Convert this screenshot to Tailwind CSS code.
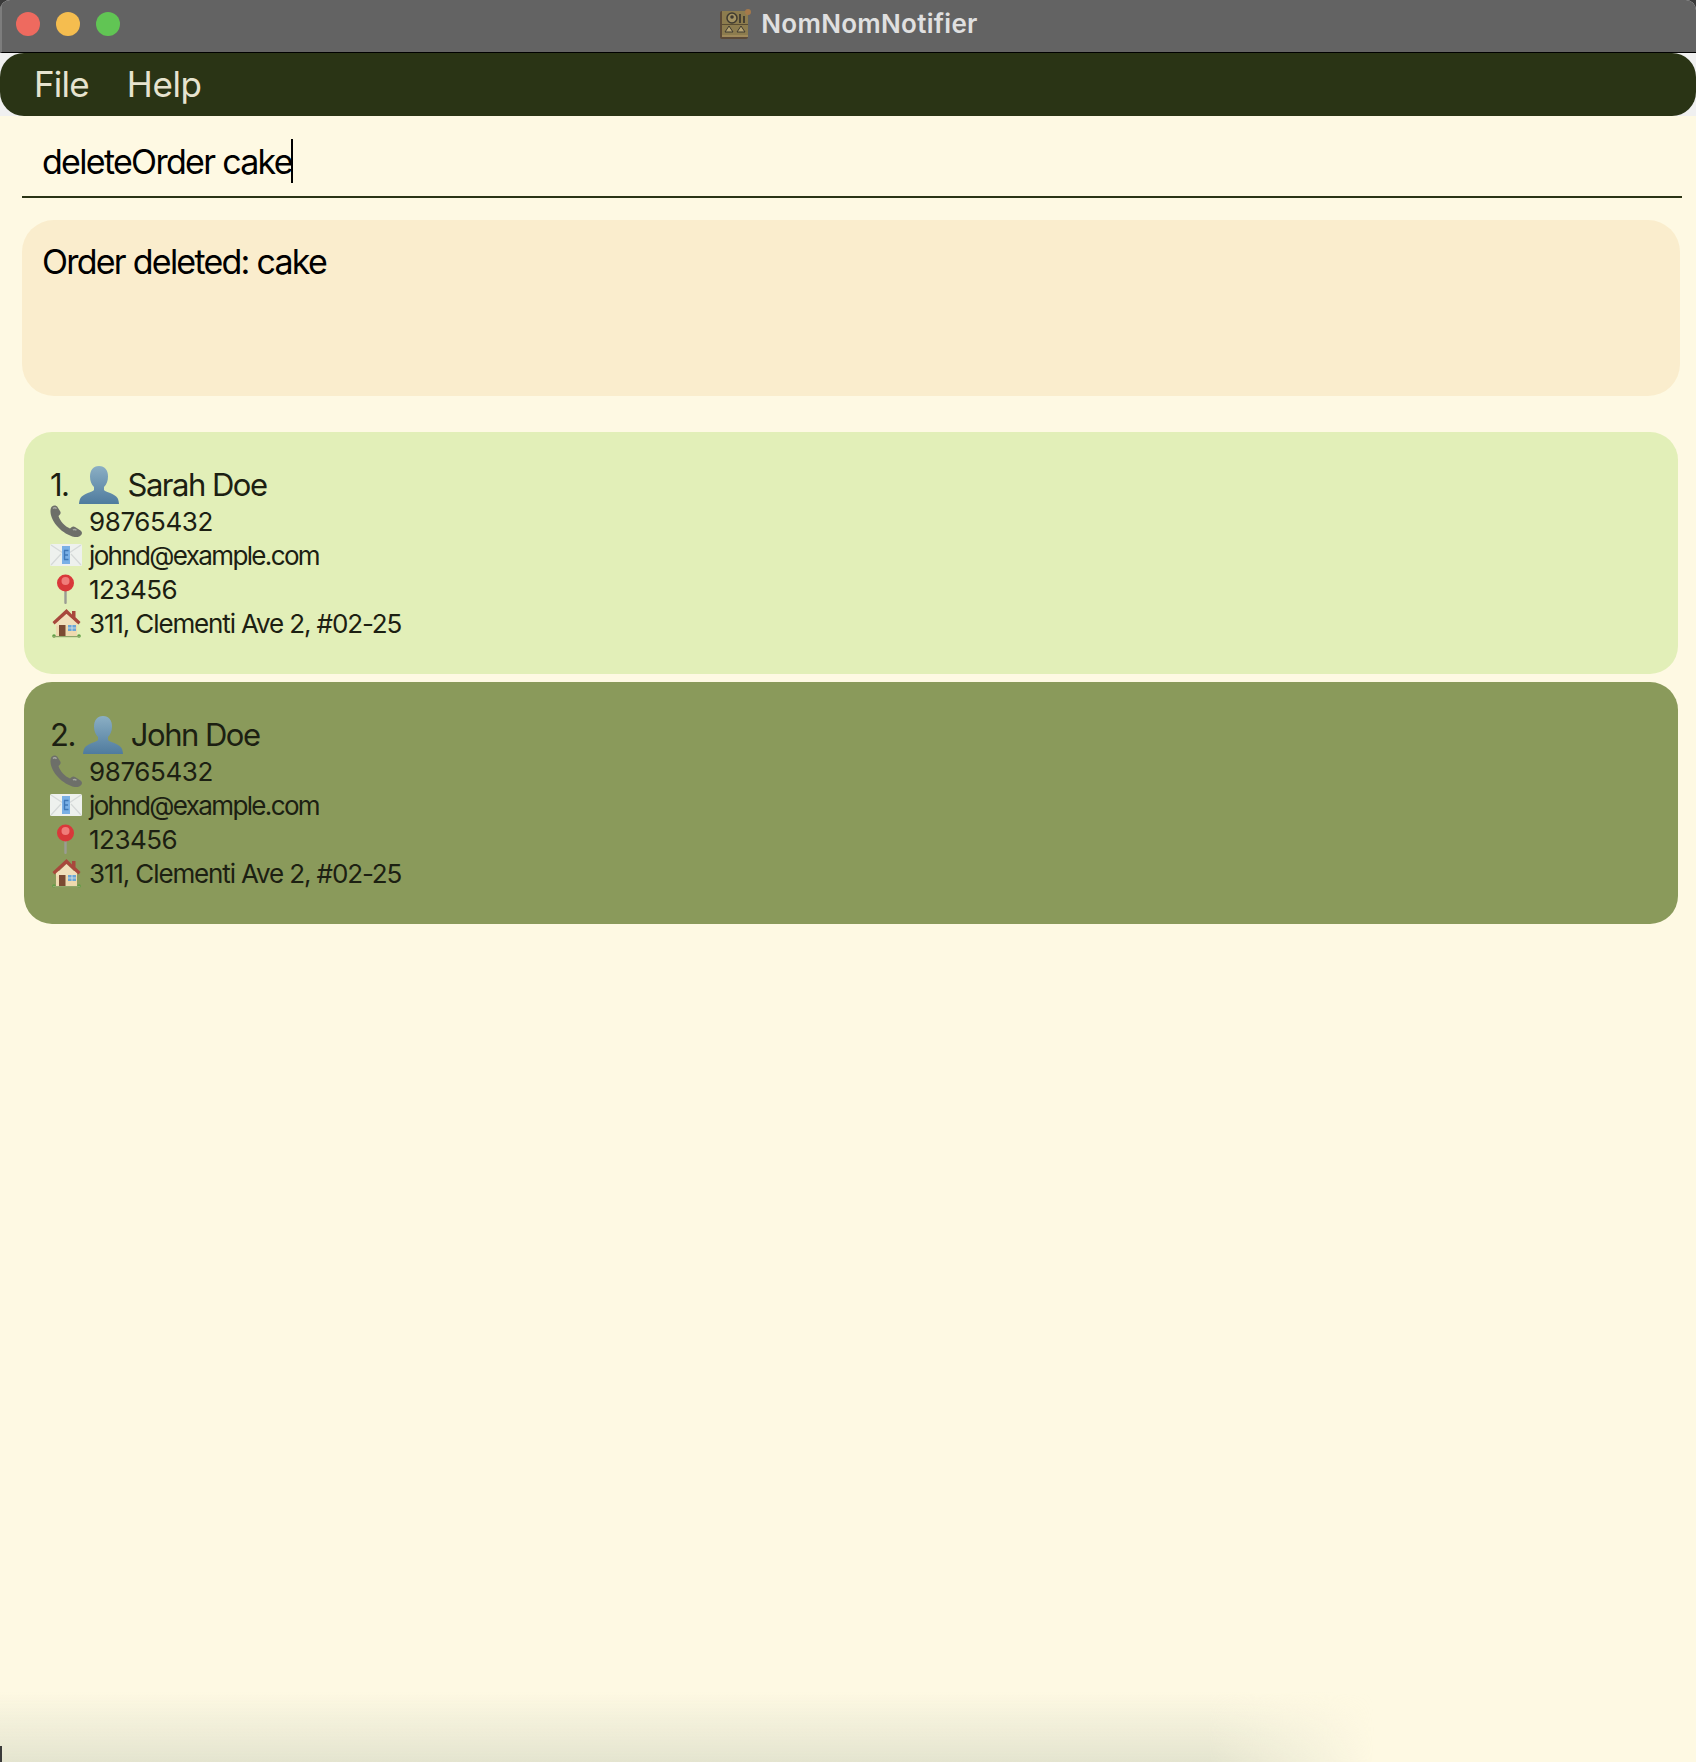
<!DOCTYPE html>
<html lang="en">
<head>
  <meta charset="UTF-8" />
  <meta name="viewport" content="width=device-width, initial-scale=1.0"/>
  <title>NomNomNotifier</title>
  <script src="https://cdn.jsdelivr.net/npm/@tailwindcss/browser@4"></script>
</head>
<body class="bg-[#3a3a3a] font-['Inter',sans-serif]">
  <svg class="absolute w-0 h-0">
    <defs>
      <linearGradient id="personFill" x1="0" y1="0" x2="0" y2="1">
        <stop offset="0" stop-color="#8bafc4"/>
        <stop offset="1" stop-color="#4f7b9e"/>
      </linearGradient>
      <symbol id="person" viewBox="0 0 40 38">
        <path d="M20 0c6 0 9 4.500 9 10.500 0 4.500-1.500 8-4 10.500v3c1 2 11 3.500 13.500 8 .9 1.800 1.300 3.500 1.500 6H0c.2-2.500.6-4.200 1.500-6C4 27.500 14 26 15 24v-3c-2.500-2.500-4-6-4-10.500C11 4.500 14 0 20 0z" fill="url(#personFill)"/>
      </symbol>
      <symbol id="phone" viewBox="0 0 32 32">
        <path d="M2 1.500c2-1.500 4.500-1 5.500.5l2.800 4.500c.7 1.300.3 2.500-.8 3.500L8.500 11c1.500 5 6.500 10.500 11.500 12.500l1.500-1.300c1.200-1 2.400-1 3.500-.2l5.500 3.500c1.500 1 2 3 .7 4.500-1.500 1.800-4 2.500-6.500 2C12.500 29.500 1 17 .5 7 .4 4.500.8 2.500 2 1.500z" fill="#6d6f69"/>
        <path d="M3 3.500c1-1 2.500-1 3.500.3M23 25c1-.8 2.500-.5 3.500.2" stroke="#a6a8a2" stroke-width="1.400" fill="none"/>
      </symbol>
      <symbol id="mail" viewBox="0 0 32 22">
        <rect x="0" y="0" width="32" height="22" rx="1.500" fill="#eef1ee"/>
        <path d="M1 1l15 10L31 1M1 21l10-11M31 21L21 10" stroke="#d5d9d8" stroke-width="1.200" fill="none"/>
        <rect x="12" y="2" width="8" height="18" fill="#7ab0e6"/>
        <path d="M14 6.500h4.500M14 11h4M14 15.500h4.500M14.500 6.500v9" stroke="#3f78b8" stroke-width="1.400" fill="none"/>
      </symbol>
      <symbol id="pin" viewBox="0 0 19 30">
        <rect x="8.300" y="14" width="2.400" height="16" rx="1" fill="#9a9c94"/>
        <circle cx="9.500" cy="9" r="8.500" fill="#d9383a"/>
        <circle cx="9.500" cy="7" r="4" fill="#f07c7a"/>
      </symbol>
      <symbol id="house" viewBox="0 0 29 30">
        <rect x="4" y="13" width="21" height="15" fill="#eed9ae"/>
        <path d="M14.500 1L0.500 14l2 2.500L14.500 6l12 10.500 2-2.500-5-4.800V3h-3.500v3.500z" fill="#a8483c"/>
        <path d="M14.500 6L4 16v2h21v-2z" fill="#f1dfba"/>
        <rect x="7" y="17" width="6.500" height="11" fill="#7b4a32"/>
        <rect x="16" y="17" width="8" height="6" fill="#6aa6d6"/>
        <path d="M20 17v6M16 20h8" stroke="#dfe6e2" stroke-width=".8"/>
        <circle cx="2" cy="28" r="1.800" fill="#5f9e45"/>
        <circle cx="27" cy="28" r="1.800" fill="#5f9e45"/>
        <rect x="1" y="28" width="27" height="1.200" fill="#8fa66a"/>
      </symbol>
    </defs>
  </svg>

  <div class="relative w-[1696px] h-[1762px] overflow-hidden bg-[#f0f0f0] rounded-t-[10px] flex flex-col">
    <!-- title bar -->
    <div class="relative h-[53px] shrink-0 bg-[#636363] border-b border-black border-l-2 border-l-[#7d7d7d] flex items-center justify-center">
      <div class="absolute left-[14px] top-[12px] flex gap-[16px]">
        <span class="w-6 h-6 rounded-full bg-[#ee6a5f]"></span>
        <span class="w-6 h-6 rounded-full bg-[#f5bd4f]"></span>
        <span class="w-6 h-6 rounded-full bg-[#61c554]"></span>
      </div>
      <div class="flex items-center gap-[10px] mt-[-4px]">
        <svg width="31" height="30" viewBox="0 0 31 30" class="blur-[0.4px]">
          <rect x="0" y="2" width="28" height="28" rx="2" fill="#5c4a38"/>
          <rect x="2" y="2" width="26" height="24" fill="#8d7c4e"/>
          <circle cx="12" cy="9" r="5" fill="#a39262" stroke="#3f3a30" stroke-width="1.500"/>
          <circle cx="12" cy="8" r="1.800" fill="#3f3a30"/>
          <circle cx="28" cy="3" r="3" fill="#a5794a"/>
          <path d="M20 5v9M24 7v7" stroke="#3f3a30" stroke-width="1.800"/>
          <path d="M5 23l4-6 4 6zM17 23l4-6 4 6z" fill="#b7a574" stroke="#3f3a30"/>
          <path d="M2 15.500h26" stroke="#5a4d33"/>
          <rect x="2" y="26" width="26" height="2" fill="#a08a5a"/>
        </svg>
        <span class="text-[26px] leading-[30px] font-semibold text-[#e0e0e0] tracking-[0.3px]">NomNomNotifier</span>
      </div>
    </div>

    <!-- menu bar -->
    <div class="h-[63px] shrink-0 bg-[#2a3415] rounded-[24px] flex items-center pl-[34px] text-[35px] text-[#e6e3cf]">
      <span class="tracking-[-0.8px]">File</span>
      <span class="tracking-[-0.4px] ml-[38px]">Help</span>
    </div>

    <div class="flex-1 bg-[#fef9e3]">
      <!-- command box -->
      <div class="ml-[22px] mr-[14px] h-[82px] border-b-2 border-[#2a3415] pl-[20px] pt-[10px] flex items-center">
        <span class="text-[34px] text-black tracking-[-1.7px] leading-none mt-[2px]">deleteOrder cake</span>
        <span class="w-[2px] h-[44px] bg-black ml-[-1px]"></span>
      </div>

      <!-- result box -->
      <div class="mt-[22px] ml-[22px] mr-[16px] h-[176px] bg-[#faedcd] rounded-[32px] pl-[20px] pt-[21px]">
        <p class="text-[34px] leading-[42px] text-black tracking-[-1.75px]">Order deleted: cake</p>
      </div>

      <!-- person list -->
      <div class="mt-[36px] ml-[24px] mr-[18px] flex flex-col gap-[8px] text-[#1c2012]">
        <div class="h-[242px] bg-[#e2efb8] rounded-[28px] pl-[26px] pt-[32px]">
          <div class="flex items-center h-[40px] pt-[3px] text-[31px] tracking-[-1.5px]">
            <span>1.</span>
            <svg class="w-[40px] h-[38px] ml-[10px] mr-[9px] mt-[-2px] blur-[0.4px]"><use href="#person"/></svg>
            <span>Sarah Doe</span>
          </div>
          <div class="flex items-center h-[34px] text-[26px]"><svg class="w-[32px] h-[32px] mr-[7px] blur-[0.5px]"><use href="#phone"/></svg><span class="tracking-[-0.4px]">98765432</span></div>
          <div class="flex items-center h-[34px] text-[26px]"><svg class="w-[32px] h-[22px] mr-[7px] blur-[0.5px]"><use href="#mail"/></svg><span class="tracking-[-1.64px]">johnd@example.com</span></div>
          <div class="flex items-center h-[34px] text-[26px]"><svg class="w-[19px] h-[30px] ml-[6px] mr-[14px] blur-[0.5px]"><use href="#pin"/></svg><span class="tracking-[-0.5px]">123456</span></div>
          <div class="flex items-center h-[34px] text-[26px]"><svg class="w-[29px] h-[30px] ml-[2px] mr-[8px] blur-[0.5px]"><use href="#house"/></svg><span class="tracking-[-1.13px]">311, Clementi Ave 2, #02-25</span></div>
        </div>

        <div class="h-[242px] bg-[#8a9a5b] rounded-[28px] pl-[26px] pt-[32px]">
          <div class="flex items-center h-[40px] pt-[3px] text-[31px] tracking-[-1.5px]">
            <span>2.</span>
            <svg class="w-[40px] h-[38px] ml-[8px] mr-[8px] mt-[-2px] blur-[0.4px]"><use href="#person"/></svg>
            <span>John Doe</span>
          </div>
          <div class="flex items-center h-[34px] text-[26px]"><svg class="w-[32px] h-[32px] mr-[7px] blur-[0.5px]"><use href="#phone"/></svg><span class="tracking-[-0.4px]">98765432</span></div>
          <div class="flex items-center h-[34px] text-[26px]"><svg class="w-[32px] h-[22px] mr-[7px] blur-[0.5px]"><use href="#mail"/></svg><span class="tracking-[-1.64px]">johnd@example.com</span></div>
          <div class="flex items-center h-[34px] text-[26px]"><svg class="w-[19px] h-[30px] ml-[6px] mr-[14px] blur-[0.5px]"><use href="#pin"/></svg><span class="tracking-[-0.5px]">123456</span></div>
          <div class="flex items-center h-[34px] text-[26px]"><svg class="w-[29px] h-[30px] ml-[2px] mr-[8px] blur-[0.5px]"><use href="#house"/></svg><span class="tracking-[-1.13px]">311, Clementi Ave 2, #02-25</span></div>
        </div>
      </div>
    </div>

    <!-- window shadow at the bottom -->
    <div class="absolute left-0 bottom-0 w-[1374px] h-[70px] bg-gradient-to-t from-[#e4e4cf] to-transparent [mask-image:linear-gradient(to_right,black_88%,transparent)]"></div>
    <div class="absolute left-0 bottom-0 w-[2px] h-[16px] bg-[#3a3a3a]"></div>
  </div>
</body>
</html>
